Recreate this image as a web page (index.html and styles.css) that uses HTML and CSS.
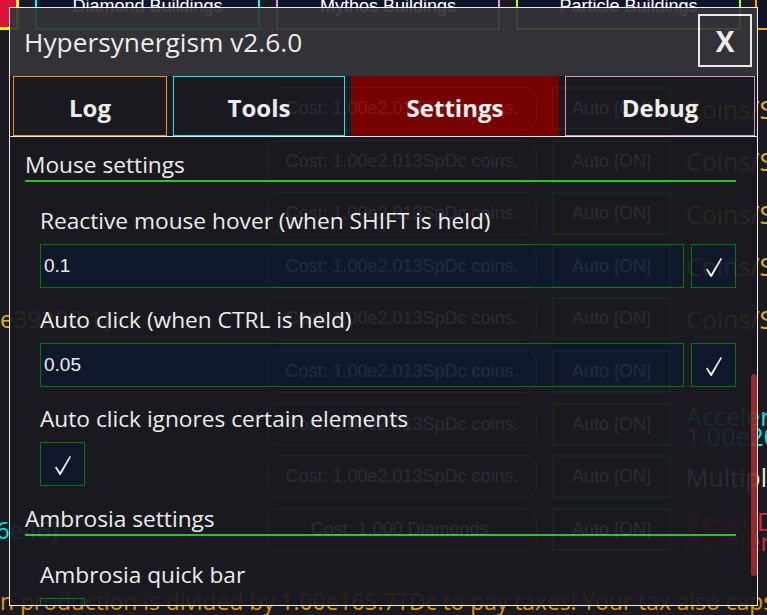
FILE: index.html
```html
<!DOCTYPE html>
<html lang="en">
<head>
<meta charset="utf-8">
<title>Hypersynergism</title>
<link rel="stylesheet" href="styles.css">
</head>
<body>
<div class="game">
  <div class="build-tabs">
    <div class="btab btab-red"></div>
    <div class="btab btab-diamond">Diamond Buildings</div>
    <div class="btab btab-mythos">Mythos Buildings</div>
    <div class="btab btab-particle">Particle Buildings</div>
    <div class="btab btab-orange">Tesseract Buildings</div>
  </div>
  <div class="rows">
    <div class="row"><div class="row-left"></div><div class="cost">Cost: 1.00e2.013SpDc coins.</div><div class="auto">Auto [ON]</div><div class="info gold">Coins/Sec: 1.00e2.013SpDc</div></div>
    <div class="row"><div class="row-left"></div><div class="cost">Cost: 1.00e2.013SpDc coins.</div><div class="auto">Auto [ON]</div><div class="info gold">Coins/Sec: 1.00e2.013SpDc</div></div>
    <div class="row"><div class="row-left"></div><div class="cost">Cost: 1.00e2.013SpDc coins.</div><div class="auto">Auto [ON]</div><div class="info gold">Coins/Sec: 1.00e2.013SpDc</div></div>
    <div class="row"><div class="row-left"></div><div class="cost">Cost: 1.00e2.013SpDc coins.</div><div class="auto">Auto [ON]</div><div class="info gold">Coins/Sec: 1.00e2.013SpDc</div></div>
    <div class="row"><div class="row-left"><span class="left-text gold">e39202.1]</span></div><div class="cost">Cost: 1.00e2.013SpDc coins.</div><div class="auto">Auto [ON]</div><div class="info gold">Coins/Sec: 1.00e2.013SpDc</div></div>
    <div class="row"><div class="row-left"></div><div class="cost">Cost: 1.00e2.013SpDc coins.</div><div class="auto">Auto [ON]</div><div class="info"></div></div>
    <div class="row"><div class="row-left"></div><div class="cost">Cost: 1.00e2.013SpDc coins.</div><div class="auto">Auto [ON]</div><div class="info cyan two">Accelerator Boosts:<br>1.00e2013SpDc</div></div>
    <div class="row"><div class="row-left"></div><div class="cost">Cost: 1.00e2.013SpDc coins.</div><div class="auto">Auto [ON]</div><div class="info light">Multipliers: 1.00e2013</div></div>
    <div class="row"><div class="row-left"><span class="left-text cyan shift">6e46]</span></div><div class="cost">Cost: 1,000 Diamonds.</div><div class="auto">Auto [ON]</div><div class="info red two">Reset Diamonds and<br>Accelerators</div></div>
  </div>
  <p class="tax">n production is divided by 1.00e165.7TDc to pay taxes! Your tax also caps</p>
</div>

<div class="modal">
  <div class="modal-head">
    <div class="modal-title">Hypersynergism v2.6.0</div>
    <button class="close-btn">X</button>
  </div>
  <div class="modal-tabs">
    <button class="mtab mtab-log">Log</button>
    <button class="mtab mtab-tools">Tools</button>
    <button class="mtab mtab-settings">Settings</button>
    <button class="mtab mtab-debug">Debug</button>
  </div>
  <div class="modal-main">
    <div class="modal-body">
      <h3 class="sect-title">General settings</h3>
      <div class="item">
        <div class="item-label">Number of decimals shown</div>
        <div class="field"><input class="num" type="text" value="2"><button class="check"><svg class="tick" viewBox="0 0 16 19" width="16" height="19"><path d="M0 11.4 L1.3 10.6 L5.1 15.9 L14.7 0 L16 0.8 L5.7 18.9 L4.6 18.9 Z" fill="#fff"/></svg></button></div>
      </div>
      <div class="item">
        <div class="item-label">Show notifications</div>
        <div class="field"><button class="check"><svg class="tick" viewBox="0 0 16 19" width="16" height="19"><path d="M0 11.4 L1.3 10.6 L5.1 15.9 L14.7 0 L16 0.8 L5.7 18.9 L4.6 18.9 Z" fill="#fff"/></svg></button></div>
      </div>
      <div class="item">
        <div class="item-label">Log refresh interval (ms)</div>
        <div class="field"><input class="num" type="text" value="500"><button class="check"><svg class="tick" viewBox="0 0 16 19" width="16" height="19"><path d="M0 11.4 L1.3 10.6 L5.1 15.9 L14.7 0 L16 0.8 L5.7 18.9 L4.6 18.9 Z" fill="#fff"/></svg></button></div>
      </div>
      <div class="item">
        <div class="item-label">Collapse log entries</div>
        <div class="field"><button class="check"><svg class="tick" viewBox="0 0 16 19" width="16" height="19"><path d="M0 11.4 L1.3 10.6 L5.1 15.9 L14.7 0 L16 0.8 L5.7 18.9 L4.6 18.9 Z" fill="#fff"/></svg></button></div>
      </div>
      <div class="item">
        <div class="item-label">Remember open panel</div>
        <div class="field"><button class="check"><svg class="tick" viewBox="0 0 16 19" width="16" height="19"><path d="M0 11.4 L1.3 10.6 L5.1 15.9 L14.7 0 L16 0.8 L5.7 18.9 L4.6 18.9 Z" fill="#fff"/></svg></button></div>
      </div>

      <h3 class="sect-title" id="mouse-settings">Mouse settings</h3>
      <div class="item">
        <div class="item-label">Reactive mouse hover (when SHIFT is held)</div>
        <div class="field"><input class="num" type="text" value="0.1"><button class="check"><svg class="tick" viewBox="0 0 16 19" width="16" height="19"><path d="M0 11.4 L1.3 10.6 L5.1 15.9 L14.7 0 L16 0.8 L5.7 18.9 L4.6 18.9 Z" fill="#fff"/></svg></button></div>
      </div>
      <div class="item">
        <div class="item-label">Auto click (when CTRL is held)</div>
        <div class="field"><input class="num" type="text" value="0.05"><button class="check"><svg class="tick" viewBox="0 0 16 19" width="16" height="19"><path d="M0 11.4 L1.3 10.6 L5.1 15.9 L14.7 0 L16 0.8 L5.7 18.9 L4.6 18.9 Z" fill="#fff"/></svg></button></div>
      </div>
      <div class="item">
        <div class="item-label">Auto click ignores certain elements</div>
        <div class="field"><button class="check"><svg class="tick" viewBox="0 0 16 19" width="16" height="19"><path d="M0 11.4 L1.3 10.6 L5.1 15.9 L14.7 0 L16 0.8 L5.7 18.9 L4.6 18.9 Z" fill="#fff"/></svg></button></div>
      </div>

      <h3 class="sect-title">Ambrosia settings</h3>
      <div class="item">
        <div class="item-label">Ambrosia quick bar</div>
        <div class="field"><button class="check"><svg class="tick" viewBox="0 0 16 19" width="16" height="19"><path d="M0 11.4 L1.3 10.6 L5.1 15.9 L14.7 0 L16 0.8 L5.7 18.9 L4.6 18.9 Z" fill="#fff"/></svg></button></div>
      </div>
    </div>
    <div class="scroll-track"><div class="scroll-thumb"></div></div>
  </div>
</div>
<script src="script.js"></script>
</body>
</html>
```
FILE: styles.css
```css
html, body {
  margin: 0;
  height: 100%;
}
body {
  background: #1b1a21;
  overflow: hidden;
  font-family: "Open Sans", "Noto Sans", sans-serif;
  color: #fff;
}

/* ---------- background game page ---------- */
.build-tabs {
  display: flex;
  gap: 16px;
  margin-top: -10px;
  height: 40px;
}
.btab {
  flex: 0 0 auto;
  box-sizing: border-box;
  height: 40px;
  background: #10152b;
  border: 2px solid transparent;
  font-family: "Liberation Sans", Arial, sans-serif;
  font-size: 18px;
  line-height: 20px;
  padding-top: 4px;
  text-align: center;
  white-space: nowrap;
  color: #fff;
}
.btab-red {
  width: 19px;
  background: #dc143c;
  border: 0;
  border-right: 3px solid #ffff00;
  border-bottom: 3px solid #ffff00;
}
.btab-diamond { width: 225px; border-color: #00ffff; }
.btab-mythos { width: 224px; border-color: #dda0dd; }
.btab-particle { width: 225px; border-color: #adff2f; }
.btab-orange { width: 225px; border-color: #ffa500; margin-left: -2px; }

.rows {
  display: flex;
  flex-direction: column;
  gap: 9.6px;
  margin-top: 57px;
}
.row {
  display: flex;
  align-items: center;
  height: 43px;
}
.row-left {
  flex: 0 0 267px;
  overflow: hidden;
  white-space: nowrap;
  font-size: 24px;
}
.left-text.shift { margin-left: -4px; display: inline-block; }
.cost {
  flex: 0 0 auto;
  box-sizing: border-box;
  width: 270px;
  height: 43px;
  border: 1px solid #a0a0a0;
  border-radius: 12px;
  font-family: "Liberation Sans", Arial, sans-serif;
  font-size: 18px;
  color: #f0f0f0;
  display: flex;
  align-items: center;
  justify-content: center;
}
.auto {
  flex: 0 0 auto;
  box-sizing: border-box;
  width: 119px;
  height: 43px;
  margin-left: 15px;
  border: 2px solid #00c000;
  font-family: "Liberation Sans", Arial, sans-serif;
  font-size: 18px;
  color: #f0f0f0;
  display: flex;
  align-items: center;
  justify-content: center;
}
.info {
  margin-left: 15px;
  white-space: nowrap;
  font-size: 25px;
  line-height: 30px;
}
.info.two {
  line-height: 20px;
  padding-top: 3px;
}
.gold { color: #e0b020; }
.cyan { color: #00e5e5; }
.red { color: #e0203a; }
.light { color: #e8e8e8; }

.tax {
  margin: 36px 0 0;
  font-size: 22.8px;
  line-height: 30px;
  white-space: nowrap;
  color: #e6960c;
}

/* ---------- modal ---------- */
.modal {
  position: fixed;
  left: 9px;
  top: 7px;
  width: 749px;
  height: 599px;
  box-sizing: border-box;
  border: 1px solid #fff;
  display: flex;
  flex-direction: column;
  opacity: 0.92;
}
.modal-head {
  flex: 0 0 68px;
  background: #363539;
  display: flex;
  align-items: center;
  justify-content: space-between;
  padding: 0 5px 0 14px;
}
.modal-title {
  font-size: 26.3px;
  color: #fff;
}
.close-btn {
  align-self: flex-start;
  margin-top: 6px;
  width: 54px;
  height: 53px;
  box-sizing: border-box;
  border: 2px solid #fff;
  background: transparent;
  color: #fff;
  font-family: "Open Sans", sans-serif;
  font-weight: 700;
  font-size: 28px;
  padding: 0;
  display: flex;
  align-items: center;
  justify-content: center;
}
.modal-tabs {
  flex: 0 0 60px;
  display: flex;
  gap: 6px;
  padding-left: 3px;
  background: #1b1a21;
  border-bottom: 1px solid #fff;
}
.mtab {
  box-sizing: border-box;
  height: 60px;
  border: 1px solid transparent;
  background: #1b1a21;
  color: #fff;
  font-family: "Open Sans", sans-serif;
  font-weight: 700;
  font-size: 24px;
  padding: 2px 0 0;
}
.mtab-log { width: 154px; border-color: #ffa500; }
.mtab-tools { width: 172px; border-color: #00ffff; }
.mtab-settings { width: 208px; background: #800000; border-color: #800000; }
.mtab-debug { width: 190px; border-color: #dda0dd; }

.modal-main {
  position: relative;
  flex: 1 1 auto;
  min-height: 0;
  display: flex;
  background: #1b1a21;
}
.modal-body {
  flex: 1 1 auto;
  min-width: 0;
  overflow-y: auto;
  scrollbar-width: none;
  padding: 10px 14px 31px 15px;
}
.modal-body::-webkit-scrollbar { display: none; }
.scroll-track {
  flex: 0 0 7px;
  position: relative;
}
.scroll-thumb {
  position: absolute;
  left: 1px;
  right: 0;
  top: 0;
  height: 0;
  background: #a52a2a;
  border-radius: 3px;
}

.sect-title {
  margin: 0;
  font-size: 22.7px;
  font-weight: 400;
  line-height: 30px;
  border-bottom: 2px solid #28d428;
}
.sect-title + .item { margin-top: 24px; }
.item + .item { margin-top: 17px; }
.item + .sect-title { margin-top: 18px; }
.item { padding-left: 15px; }
.item-label {
  font-size: 22.7px;
  line-height: 30px;
}
.field {
  display: flex;
  gap: 7px;
  margin-top: 8px;
}
.num {
  width: 644px;
  height: 44px;
  box-sizing: border-box;
  margin: 0;
  border: 1px solid #008000;
  background: #101a2e;
  color: #fff;
  font-family: "Liberation Sans", Arial, sans-serif;
  font-size: 19px;
  padding: 0 3px;
  outline: none;
}
.check {
  width: 45px;
  height: 44px;
  box-sizing: border-box;
  margin: 0;
  padding: 3px 0 0;
  border: 1px solid #008000;
  background: #101a2e;
  display: flex;
  align-items: center;
  justify-content: center;
}
.tick { display: block; }
```
FILE: script.js
```js
const body = document.querySelector('.modal-body');
const head = document.getElementById('mouse-settings');
body.scrollTop = head.offsetTop - 13;

const thumb = document.querySelector('.scroll-thumb');
const ch = body.clientHeight;
const sh = body.scrollHeight;
thumb.style.height = (ch * ch / sh) + 'px';
thumb.style.top = (body.scrollTop * ch / sh) + 'px';
```
